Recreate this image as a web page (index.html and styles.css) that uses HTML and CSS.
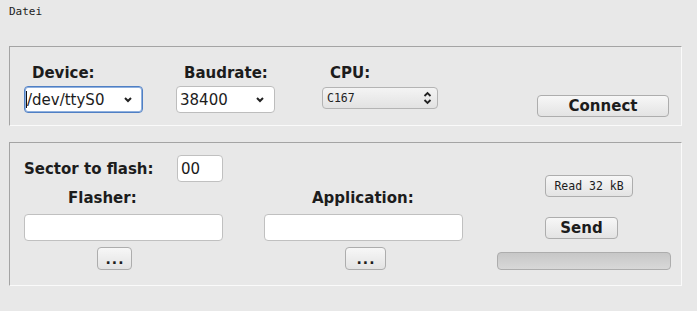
FILE: index.html
```html
<!DOCTYPE html>
<html>
<head>
<meta charset="utf-8">
<link rel="stylesheet" href="styles.css">
</head>
<body>
<div class="menu">Datei</div>
<div class="panel conn">
  <div class="col col-device">
    <div class="label">Device:</div>
    <div class="combo focused"><span class="caret"></span><span class="val">/dev/ttyS0</span>
      <svg class="chev" width="8" height="6" viewBox="0 0 8 6"><polyline points="1,1 4,4 7,1" fill="none" stroke="#222" stroke-width="2"/></svg>
    </div>
  </div>
  <div class="col col-baud">
    <div class="label">Baudrate:</div>
    <div class="combo"><span class="val">38400</span>
      <svg class="chev" width="8" height="6" viewBox="0 0 8 6"><polyline points="1,1 4,4 7,1" fill="none" stroke="#222" stroke-width="2"/></svg>
    </div>
  </div>
  <div class="col col-cpu">
    <div class="label">CPU:</div>
    <div class="cpusel"><span class="mono">C167</span>
      <svg class="updown" width="9" height="14" viewBox="0 0 9 14"><polyline points="1.5,5 4.5,2 7.5,5" fill="none" stroke="#222" stroke-width="1.8"/><polyline points="1.5,9 4.5,12 7.5,9" fill="none" stroke="#222" stroke-width="1.8"/></svg>
    </div>
  </div>
  <div class="col col-connect">
    <button class="btn connect">Connect</button>
  </div>
</div>
<div class="panel flash">
  <div class="left">
    <div class="sector">
      <div class="label sector-label">Sector to flash:</div>
      <div class="entry small">00</div>
    </div>
    <div class="files">
      <div class="file flasher">
        <div class="label fl-label">Flasher:</div>
        <div class="entry wide"></div>
        <button class="btn dots fl-dots">...</button>
      </div>
      <div class="file app">
        <div class="label app-label">Application:</div>
        <div class="entry wide"></div>
        <button class="btn dots app-dots">...</button>
      </div>
    </div>
  </div>
  <div class="right">
    <button class="btn read">Read 32 kB</button>
    <button class="btn send">Send</button>
    <div class="progress"></div>
  </div>
</div>
</body>
</html>
```

FILE: styles.css
```css
html, body {
  margin: 0;
  padding: 0;
  background: #e8e8e8;
  width: 697px;
  height: 311px;
  overflow: hidden;
  font-family: "DejaVu Sans", sans-serif;
  color: #1a1a1a;
}
.menu {
  font-family: "DejaVu Sans Mono", monospace;
  font-size: 11px;
  line-height: 13px;
  height: 41px;
  padding: 5px 0 0 9px;
  color: #222;
}
.panel {
  margin-left: 9px;
  width: 671px;
  border: 1px solid #a4a4a4;
  border-right-color: #fafafa;
  border-bottom-color: #fafafa;
  display: flex;
}
.conn {
  height: 61px;
  padding: 17px 0 0 14px;
  width: 657px;
}
.label {
  font-weight: bold;
  font-size: 15px;
  line-height: 18px;
  color: #1c1c1c;
  padding-left: 8px;
}
.col { display: flex; flex-direction: column; }
.col .label { margin-bottom: 4px; }
.col-device { width: 119px; margin-right: 33px; }
.col-baud { width: 99px; margin-right: 47px; }
.col-cpu { width: 116px; margin-right: 99px; }
.combo {
  box-sizing: border-box;
  height: 27px;
  background: #fff;
  border: 1px solid #bdbdbd;
  border-radius: 4px;
  display: flex;
  align-items: center;
  font-size: 15px;
  padding-left: 3px;
  color: #1c1c1c;
}
.combo.focused {
  border: 1px solid #4f7fc4;
  box-shadow: 0 0 0 1px #8fb0de inset;
  padding-left: 1px;
}
.caret {
  width: 1px;
  height: 17px;
  background: #111;
}
.combo .val { flex: 1; }
.chev { margin-right: 10px; }
.cpusel {
  box-sizing: border-box;
  margin-top: 1px;
  height: 22px;
  border: 1px solid #b4b4b4;
  border-radius: 4px;
  background: linear-gradient(#f4f4f4, #e2e2e2);
  display: flex;
  align-items: center;
  padding-left: 4px;
  padding-right: 5px;
}
.cpusel .mono { flex: 1; }
.mono {
  font-family: "DejaVu Sans Mono", monospace;
  font-size: 11.5px;
  color: #222;
}
.btn {
  box-sizing: border-box;
  border: 1px solid #adadad;
  border-radius: 4px;
  background: linear-gradient(#f7f7f7, #e3e3e3);
  padding: 0;
  color: #1c1c1c;
  font-family: "DejaVu Sans", sans-serif;
  font-weight: bold;
  font-size: 15px;
  display: flex;
  align-items: center;
  justify-content: center;
}
.connect {
  margin-top: 31px;
  width: 132px;
  height: 22px;
}
.flash {
  margin-top: 16px;
  height: 130px;
  padding: 12px 0 0 14px;
  width: 657px;
}
.left { width: 439px; display: flex; flex-direction: column; }
.sector { display: flex; align-items: center; height: 27px; }
.sector-label { width: 145px; padding-left: 0; margin-right: 8px; }
.entry {
  box-sizing: border-box;
  background: #fff;
  border: 1px solid #c0c0c0;
  border-radius: 4px;
  height: 27px;
  font-size: 15px;
  display: flex;
  align-items: center;
  padding-left: 3px;
}
.entry.small { width: 46px; }
.entry.wide { width: 199px; }
.files { display: flex; margin-top: 7px; }
.file { display: flex; flex-direction: column; width: 199px; }
.file .label { margin-bottom: 7px; }
.flasher { margin-right: 41px; }
.fl-label { padding-left: 44px; }
.app-label { padding-left: 48px; }
.dots {
  margin-top: 6px;
  height: 23px;
  font-weight: bold;
  font-size: 14px;
  letter-spacing: 1px;
  padding-left: 1px;
}
.fl-dots { width: 35px; margin-left: 73px; }
.app-dots { width: 41px; margin-left: 81px; }
.right {
  width: 174px;
  margin-left: 34px;
  display: flex;
  flex-direction: column;
  padding-top: 20px;
}
.read {
  width: 88px;
  height: 22px;
  margin-left: 48px;
  font-family: "DejaVu Sans Mono", monospace;
  font-weight: normal;
  font-size: 11.5px;
}
.send {
  width: 73px;
  height: 22px;
  margin-left: 48px;
  margin-top: 20px;
}
.progress {
  margin-top: 13px;
  height: 18px;
  box-sizing: border-box;
  border: 1px solid #adadad;
  border-radius: 4px;
  background: linear-gradient(#c7c7c7, #d8d8d8);
}
```
